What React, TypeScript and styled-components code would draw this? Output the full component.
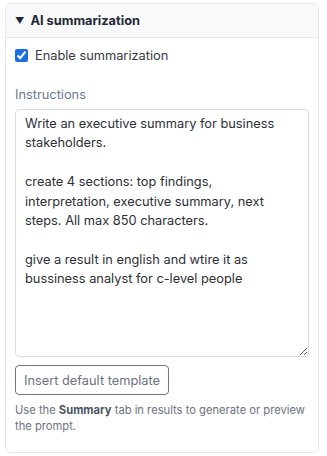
import React from "react";
import styled, { createGlobalStyle } from "styled-components";

const Global = createGlobalStyle`
  html, body { margin: 0; padding: 0; background: #ffffff; }
  body { font-family: Inter, "Noto Sans", sans-serif; }
`;

const Page = styled.div`
  padding: 3px 8px 6px 5px;
`;

const Panel = styled.details`
  border: 1px solid #e3e7ee;
  border-radius: 6px;
  background: #ffffff;
  overflow: hidden;
`;

const Header = styled.summary`
  list-style: none;
  display: flex;
  align-items: center;
  gap: 6px;
  height: 33px;
  padding: 0 9px;
  background: #f8f9fb;
  border-bottom: 1px solid #e3e7ee;
  font-size: 12.8px;
  font-weight: 700;
  color: #1f2937;
  cursor: pointer;
  &::-webkit-details-marker { display: none; }
`;

const Caret = styled.span`
  font-size: 9px;
  line-height: 1;
`;

const Body = styled.div`
  display: flex;
  flex-direction: column;
  padding: 7px 9px 18px 9px;
`;

const CheckRow = styled.label`
  display: flex;
  align-items: center;
  gap: 7px;
  font-size: 12.8px;
  color: #333a44;
  height: 20px;
`;

const Check = styled.input`
  margin: 0;
  width: 13px;
  height: 13px;
  accent-color: #1a6fe6;
`;

const FieldLabel = styled.div`
  margin-top: 20px;
  font-size: 12.8px;
  color: #6b7a90;
  line-height: 20px;
`;

const TextArea = styled.textarea`
  margin-top: 4px;
  box-sizing: border-box;
  width: 100%;
  height: 248px;
  padding: 4px 9px;
  border: 1px solid #d9dde4;
  border-radius: 4px;
  font-family: Inter, "Noto Sans", sans-serif;
  font-size: 12.8px;
  line-height: 19.4px;
  color: #2b2f36;
  resize: vertical;
  outline: none;
`;

const Button = styled.button`
  align-self: flex-start;
  margin-top: 8px;
  height: 30px;
  padding: 0 8px;
  border: 1px solid #6e7582;
  border-radius: 4px;
  background: #ffffff;
  font-family: Inter, "Noto Sans", sans-serif;
  font-size: 12.8px;
  color: #6b7280;
`;

const Help = styled.p`
  margin: 7px 0 0 0;
  font-size: 11.2px;
  line-height: 16px;
  color: #6b7280;
  b { color: #4b5563; font-weight: 700; }
`;

const text = `Write an executive summary for business stakeholders.

create 4 sections: top findings, interpretation, executive summary, next steps. All max 850 characters.

give a result in english and wtire it as bussiness analyst for c-level people`;

export default function App() {
  return (
    <>
      <Global />
      <Page>
        <Panel open>
          <Header>
            <Caret>▼</Caret>
            <span>AI summarization</span>
          </Header>
          <Body>
            <CheckRow>
              <Check type="checkbox" defaultChecked />
              <span>Enable summarization</span>
            </CheckRow>
            <FieldLabel>Instructions</FieldLabel>
            <TextArea defaultValue={text} spellCheck={false} />
            <Button>Insert default template</Button>
            <Help>
              Use the <b>Summary</b> tab in results to generate or preview the prompt.
            </Help>
          </Body>
        </Panel>
      </Page>
    </>
  );
}
